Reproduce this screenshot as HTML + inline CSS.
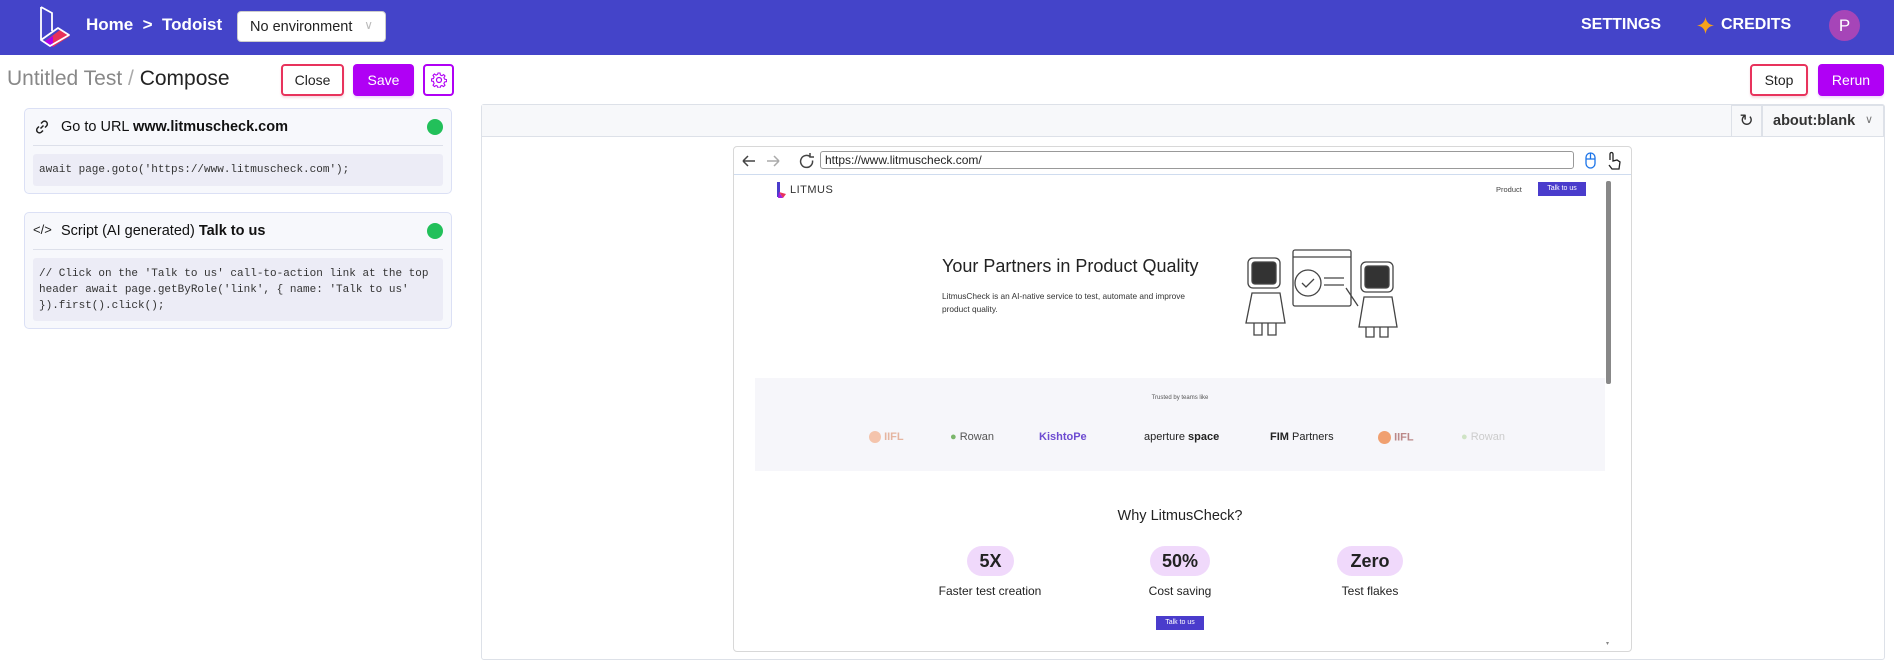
<!DOCTYPE html>
<html><head><meta charset="utf-8"><style>
*{box-sizing:border-box;margin:0;padding:0}
body{width:1894px;height:661px;overflow:hidden;background:#fff;font-family:"Liberation Sans",sans-serif;position:relative;color:#111}
.abs{position:absolute}
.hdr{left:0;top:0;width:1894px;height:55px;background:#4444c9}
.btn{position:absolute;border-radius:4px;font-size:14px;display:flex;align-items:center;justify-content:center}
.card{position:absolute;left:24px;width:428px;background:#f7f8fc;border:1px solid #dbe0f5;border-radius:5px}
.code{position:absolute;left:8px;right:8px;background:#ececf6;border-radius:3px;font-family:"Liberation Mono",monospace;font-size:11px;color:#333;padding:0 6px;line-height:16px}
.dot{position:absolute;right:8px;width:16px;height:16px;border-radius:50%;background:#22c05a}
.pill{position:absolute;height:30px;background:#f0d9fb;border-radius:15px;font-weight:bold;font-size:18px;color:#222;display:flex;align-items:center;justify-content:center}
.lbl{position:absolute;font-size:12px;color:#222;transform:translateX(-50%);white-space:nowrap}
.logo{position:absolute;top:431px;font-size:11px;color:#555;white-space:nowrap}
</style></head><body>
<div class="abs hdr"></div>
<svg class="abs" style="left:0;top:0" width="80" height="55">
<polygon points="44,42 53,47 70,36 60,30" fill="#e8325a"/>
<polygon points="44,42 53,47 53,36" fill="#b000e8"/>
<polyline points="41,7 52,13 52,31" fill="none" stroke="#fff" stroke-width="1.8"/>
<polyline points="41,7 41,40 50,46 69,35 58,28 41,40" fill="none" stroke="#fff" stroke-width="1.8" stroke-linejoin="round"/>
</svg>
<div class="abs" style="left:86px;top:15px;color:#fff;font-size:17px;font-weight:bold">Home &nbsp;&gt;&nbsp; Todoist</div>
<div class="abs" style="left:237px;top:11px;width:149px;height:31px;background:#fff;border-radius:4px;border:1px solid #ccc;font-size:14.5px;padding:7px 12px;color:#222">No environment<span style="position:absolute;right:12px;top:6px;color:#bbb;font-size:12px">&#8744;</span></div>
<div class="abs" style="left:1581px;top:16px;color:#fff;font-size:16px;font-weight:bold">SETTINGS</div>
<svg class="abs" style="left:1697px;top:17px" width="17" height="17"><path d="M8.5 0 Q9.5 7.5 17 8.5 Q9.5 9.5 8.5 17 Q7.5 9.5 0 8.5 Q7.5 7.5 8.5 0Z" fill="#f7a21a"/></svg>
<div class="abs" style="left:1721px;top:16px;color:#fff;font-size:16px;font-weight:bold">CREDITS</div>
<div class="abs" style="left:1829px;top:10px;width:31px;height:31px;border-radius:50%;background:#a645b8;color:#fff;font-size:17px;text-align:center;line-height:31px">P</div>

<div class="abs" style="left:7px;top:67px;font-size:21px;color:#888">Untitled Test <span style="color:#aaa">/</span> <span style="color:#222">Compose</span></div>
<div class="btn" style="left:281px;top:64px;width:63px;height:32px;border:2px solid #e8335c;color:#222;box-shadow:0 2px 2px #f6dce4">Close</div>
<div class="btn" style="left:353px;top:64px;width:61px;height:32px;background:#b000f5;color:#fff;box-shadow:0 2px 2px #f0dbfb">Save</div>
<div class="btn" style="left:423px;top:64px;width:31px;height:32px;border:2px solid #b000f5"><svg width="16" height="16" viewBox="0 0 16 16"><circle cx="8" cy="8" r="2.5" fill="none" stroke="#b000f5" stroke-width="1.2"/><path d="M7 1h2l.4 2 1.5.7 1.7-1.1 1.4 1.4-1.1 1.7.7 1.5 2 .4v2l-2 .4-.7 1.5 1.1 1.7-1.4 1.4-1.700-1.1-1.5.7-.4 2H7l-.4-2-1.5-.7-1.7 1.1-1.4-1.4 1.1-1.7L2.4 9.4.4 9V7l2-.4.7-1.5L2 3.4 3.4 2l1.7 1.1 1.5-.7z" fill="none" stroke="#b000f5" stroke-width="1.1"/></svg></div>
<div class="btn" style="left:1750px;top:64px;width:58px;height:32px;border:2px solid #e8335c;color:#222;box-shadow:0 2px 2px #f6dce4">Stop</div>
<div class="btn" style="left:1818px;top:64px;width:66px;height:32px;background:#b000f5;color:#fff;box-shadow:0 2px 2px #f0dbfb">Rerun</div>

<div class="card" style="top:108px;height:86px">
<svg class="abs" style="left:9px;top:10px" width="16" height="16" viewBox="0 0 16 16" fill="none" stroke="#222" stroke-width="1.5"><path d="M6.5 9.5l3-3M7 4.5l1.5-1.5a2.8 2.8 0 014 4L11 8.5M9 11.5L7.5 13a2.8 2.8 0 01-4-4L5 7.5"/></svg>
<div class="abs" style="left:36px;top:10px;font-size:14.5px">Go to URL <b>www.litmuscheck.com</b></div>
<div class="dot" style="top:10px"></div>
<div class="abs" style="left:8px;right:8px;top:36px;border-top:1px solid #dde0ea"></div>
<div class="code" style="top:45px;height:32px;padding-top:8px">await page.goto('https://www.litmuscheck.com');</div>
</div>
<div class="card" style="top:212px;height:117px">
<div class="abs" style="left:8px;top:9px;font-size:13px;color:#222">&lt;/&gt;</div>
<div class="abs" style="left:36px;top:10px;font-size:14.5px">Script (AI generated) <b>Talk to us</b></div>
<div class="dot" style="top:10px"></div>
<div class="abs" style="left:8px;right:8px;top:36px;border-top:1px solid #dde0ea"></div>
<div class="code" style="top:45px;height:63px;padding-top:8px;white-space:pre">// Click on the 'Talk to us' call-to-action link at the top
header await page.getByRole('link', { name: 'Talk to us'
}).first().click();</div>
</div>

<div class="abs" style="left:481px;top:104px;width:1404px;height:556px;border:1px solid #dde1e8;border-radius:3px"></div>
<div class="abs" style="left:482px;top:105px;width:1402px;height:32px;background:#f7f8fa;border-bottom:1px solid #dde1e8"></div>
<div class="abs" style="left:1731px;top:105px;width:31px;height:32px;border:1px solid #dde1e8;background:#f7f8fa;font-size:17px;text-align:center;line-height:30px;color:#333">&#x21bb;</div>
<div class="abs" style="left:1762px;top:105px;width:122px;height:32px;border:1px solid #dde1e8;background:#f7f8fa;font-size:14.5px;font-weight:bold;color:#333;padding:7px 10px">about:blank<span style="position:absolute;right:10px;top:7px;font-weight:normal;font-size:11px;color:#777">&#8744;</span></div>

<div class="abs" style="left:733px;top:146px;width:899px;height:506px;border:1px solid #d8d8d8;border-radius:4px;background:#fff"></div>
<div class="abs" style="left:734px;top:174px;width:897px;border-top:1px solid #cfdcef"></div>
<svg class="abs" style="left:740px;top:152px" width="76" height="18" fill="none" stroke-width="1.5"><path d="M3 9h12M3 9l5-5M3 9l5 5" stroke="#444"/><path d="M39 9H27M39 9l-5-5M39 9l-5 5" stroke="#aaa"/><path d="M70 4.5a6 6 0 102.5 4M70 1v4h4" stroke="#444"/></svg>
<div class="abs" style="left:820px;top:151px;width:754px;height:18px;border:1px solid #999;border-radius:3px;font-size:12px;padding:1px 4px;color:#222">https://www.litmuscheck.com/</div>
<svg class="abs" style="left:1583px;top:151px" width="44" height="20" fill="none" stroke-width="1.3"><rect x="3" y="2" width="9" height="15" rx="4.5" stroke="#1a73e8"/><path d="M7.5 2v6M3 8h9" stroke="#1a73e8"/><path d="M27 9V3a1.5 1.5 0 013 0v7l4-1 3 2-1 7h-7l-3-4" stroke="#222"/></svg>

<svg class="abs" style="left:776px;top:182px" width="12" height="16"><rect x="1" y="0" width="3" height="15" fill="#4a3ccc"/><path d="M3 10l7 2-3 4z" fill="#e8325a"/><path d="M3 10l4 6H2z" fill="#a020e0"/></svg>
<div class="abs" style="left:790px;top:184px;font-size:11px;color:#333;letter-spacing:.5px">LITMUS</div>
<div class="abs" style="left:1496px;top:185px;font-size:7.5px;color:#444">Product</div>
<div class="abs" style="left:1538px;top:182px;width:48px;height:14px;background:#4a3ccc;color:#fff;font-size:7px;text-align:center;line-height:14px">Talk to us</div>
<div class="abs" style="left:942px;top:256px;font-size:18px;color:#222">Your Partners in Product Quality</div>
<div class="abs" style="left:942px;top:290px;width:270px;font-size:8.3px;line-height:13px;color:#333">LitmusCheck is an AI-native service to test, automate and improve product quality.</div>
<svg class="abs" style="left:1238px;top:248px" width="165" height="92" fill="#fff" stroke="#444" stroke-width="1.3">
<rect x="55" y="2" width="58" height="56" rx="2"/><path d="M55 9h58"/><circle cx="70" cy="35" r="13"/><path d="M64 35l4 4 8-8M86 30h20M86 37h20"/>
<rect x="10" y="10" width="32" height="30" rx="5"/><rect x="14" y="14" width="24" height="22" rx="3" fill="#333"/>
<path d="M14 45h28l5 30H8zM16 75v12h8V75M30 75v12h8V75"/>
<rect x="123" y="14" width="32" height="30" rx="5"/><rect x="127" y="18" width="24" height="22" rx="3" fill="#333"/>
<path d="M126 49h28l5 30h-38zM128 79v10h8V79M142 79v10h8V79M120 58l-12-18"/>
</svg>
<div class="abs" style="left:1606px;top:181px;width:5px;height:203px;background:#888;border-radius:2px"></div>
<div class="abs" style="left:1606px;top:640px;font-size:6px;color:#888">&#9662;</div>

<div class="abs" style="left:755px;top:378px;width:850px;height:93px;background:#f6f6fa"></div>
<div class="abs" style="left:1180px;top:395px;transform:translateX(-50%);font-size:6px;color:#555">Trusted by teams like</div>
<div class="logo" style="left:869px;color:#e5b5a0"><span style="display:inline-block;width:12px;height:12px;border-radius:50%;background:#f4c4ac;vertical-align:middle"></span> <b>IIFL</b></div>
<div class="logo" style="left:950px"><span style="color:#7bb66b">&#9679;</span> Rowan</div>
<div class="logo" style="left:1039px;color:#6d4bd1;font-weight:bold">KishtoPe</div>
<div class="logo" style="left:1144px;color:#222">aperture <b>space</b></div>
<div class="logo" style="left:1270px;color:#222"><b>FIM</b> Partners</div>
<div class="logo" style="left:1378px;color:#e5b5a0"><span style="display:inline-block;width:13px;height:13px;border-radius:50%;background:#f0a070;vertical-align:middle"></span> <b style="color:#b88">IIFL</b></div>
<div class="logo" style="left:1461px;color:#ccc"><span style="color:#cfe3c5">&#9679;</span> Rowan</div>

<div class="abs" style="left:1180px;top:508px;transform:translateX(-50%);font-size:14.5px;color:#222">Why LitmusCheck?</div>
<div class="pill" style="left:967px;top:546px;width:47px">5X</div>
<div class="pill" style="left:1150px;top:546px;width:60px">50%</div>
<div class="pill" style="left:1337px;top:546px;width:66px">Zero</div>
<div class="lbl" style="left:990px;top:584px">Faster test creation</div>
<div class="lbl" style="left:1180px;top:584px">Cost saving</div>
<div class="lbl" style="left:1370px;top:584px">Test flakes</div>
<div class="abs" style="left:1156px;top:616px;width:48px;height:14px;background:#4a3ccc;color:#fff;font-size:7px;text-align:center;line-height:14px">Talk to us</div>
</body></html>
